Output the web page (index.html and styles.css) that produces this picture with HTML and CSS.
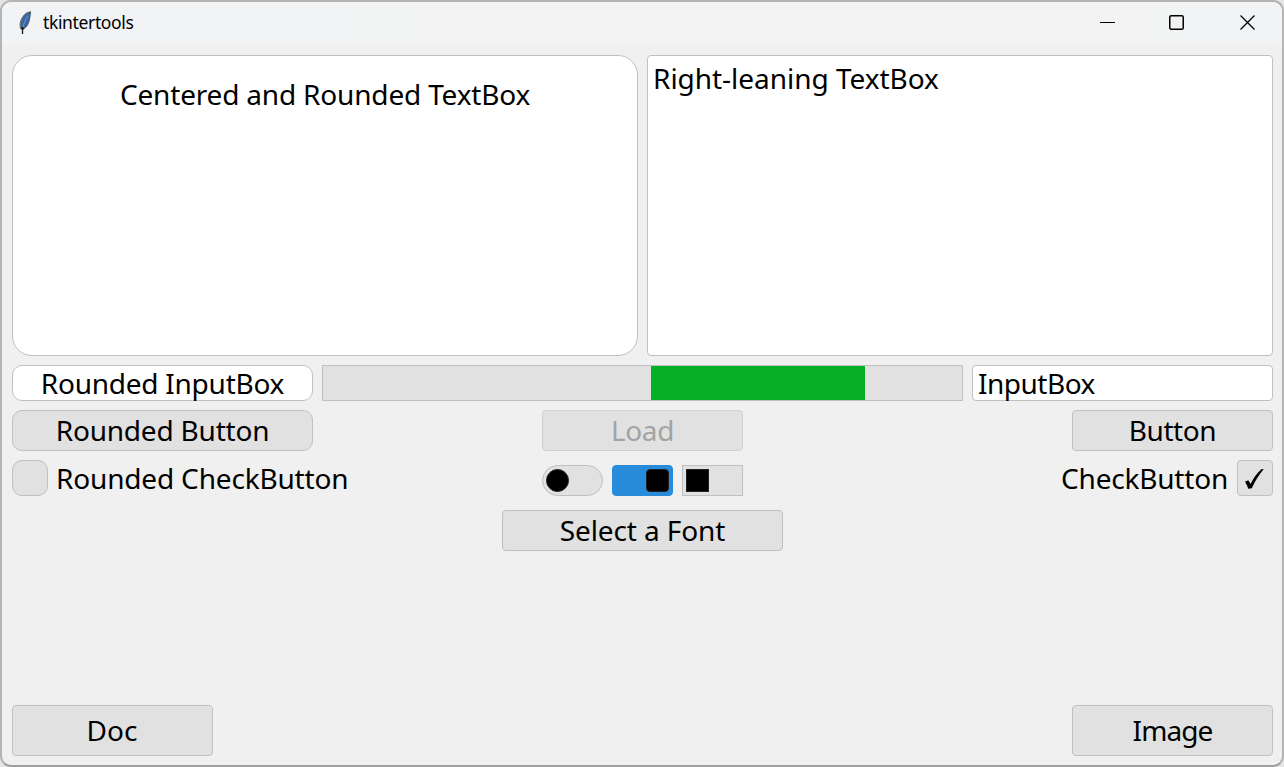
FILE: index.html
```
<!DOCTYPE html>
<html lang="en">
<head>
<meta charset="utf-8">
<title>tkintertools</title>
<link rel="stylesheet" href="styles.css">
</head>
<body>
<div class="window">
  <header class="titlebar">
    <svg class="feather" width="14" height="24" viewBox="0 0 14 24">
      <path d="M12.600 .8C9.500 1.200 6.500 3 4.800 6c-2 3.500-2.600 7.500-2 11.500l2.800.4c3-1.600 5-5 5.900-9.400.5-2.600.8-5.400 1.100-7.700z" fill="#3568a8" stroke="#50565c" stroke-width="1"/>
      <path d="M9.800 4.500C7.500 8.500 5.600 12.500 4.800 17" fill="none" stroke="#6c95c6" stroke-width="1"/>
      <path d="M4.500 6.500C2.500 9.500 1.700 13.500 2.400 17" fill="none" stroke="#777" stroke-width="1.200"/>
      <path d="M2.800 17.500h3M4.500 16v7" fill="none" stroke="#111" stroke-width="1.300"/>
    </svg>
    <span class="title">tkintertools</span>
    <div class="controls">
      <svg width="15" height="15" viewBox="0 0 15 15"><path d="M0 7.500h15" stroke="#000"/></svg>
      <svg width="15" height="15" viewBox="0 0 15 15"><rect x=".75" y=".75" width="13.500" height="13.500" rx="1.500" fill="none" stroke="#000" stroke-width="1.500"/></svg>
      <svg width="15" height="15" viewBox="0 0 15 15"><path d="M.5.5l14 14M14.500.5l-14 14" stroke="#000" stroke-width="1.300"/></svg>
    </div>
  </header>
  <main class="content">
    <div class="row boxes">
      <div class="box textbox round-lg"><span class="t-centered">Centered and Rounded TextBox</span></div>
      <div class="box textbox plain"><span class="t-right">Right-leaning TextBox</span></div>
    </div>
    <div class="row inputs">
      <div class="box input round-md"><span class="t-rinput">Rounded InputBox</span></div>
      <div class="progress"><div class="bar"></div></div>
      <div class="box input plain left"><span class="t-input">InputBox</span></div>
    </div>
    <div class="row buttons">
      <div class="cell"><button class="box btn wide round-md"><span class="t-rbutton">Rounded Button</span></button></div>
      <button class="box btn disabled"><span class="t-load">Load</span></button>
      <div class="cell end"><button class="box btn"><span class="t-button">Button</span></button></div>
    </div>
    <div class="row checks">
      <div class="cell"><span class="box check round-md"></span><span class="label t-rcheck">Rounded CheckButton</span></div>
      <div class="switches">
        <span class="box switch pill"><i class="knob"></i></span>
        <span class="box switch on"><i class="knob"></i></span>
        <span class="box switch square"><i class="knob"></i></span>
      </div>
      <div class="cell end"><span class="label t-check">CheckButton</span><span class="box check"><svg width="22" height="24" viewBox="0 0 22 24"><path d="M1 15.800l3.200-1.500c1 1.200 1.700 2.300 2.300 3.600C9.300 12.500 12.800 7.300 17.300 3.200l2.500-.2C15.300 8.300 11.200 14.500 7.800 22.200l-3.500.6c-.7-2.500-1.800-4.800-3.300-7z"/></svg></span></div>
    </div>
    <div class="row font-row"><button class="box btn font-btn"><span class="t-font">Select a Font</span></button></div>
    <div class="row footer">
      <button class="box btn tall"><span class="t-doc">Doc</span></button>
      <button class="box btn tall"><span class="t-image">Image</span></button>
    </div>
  </main>
</div>
</body>
</html>
```
FILE: styles.css
```
* { box-sizing: border-box; }
body {
  margin: 0;
  background: #e4e4e4;
  font: 28px/36px "Noto Sans", "Open Sans", sans-serif;
  color: #000;
}
.window {
  width: 1284px;
  height: 767px;
  border: 2px solid #b4b4b4;
  border-bottom-color: #a0a0a0;
  border-radius: 11px;
  background: #f0f0f0;
  overflow: hidden;
  display: flex;
  flex-direction: column;
}
.titlebar {
  height: 43px;
  flex: none;
  padding: 0 27px 2px 16px;
  display: flex;
  align-items: center;
  background: linear-gradient(90deg, #f1f3f5, #f3f3f3 50%, #f3f3f3 85%, #f1f3f5);
}
.feather { flex: none; }
.title { margin: 0 0 2px 11px; font-size: 17.5px; line-height: 24px; letter-spacing: -.36px; }
.controls { margin-left: auto; display: flex; gap: 56px; }
.controls svg { display: block; }
.controls svg:first-child { margin-right: -2px; }
.content { flex: 1; display: flex; flex-direction: column; padding: 10px 9px 9px 10px; }
.row { display: flex; flex: none; }
.box {
  border: 1px solid #c0c0c0;
  border-radius: 4px;
  background: #e1e1e1;
}
.box span, .label { white-space: nowrap; }
.boxes { gap: 9px; height: 301px; }
.textbox { width: 626px; background: #fff; text-align: center; padding-top: 20px; }
.textbox.plain { text-align: left; padding: 4px 0 0 5px; }
.box.round-lg { border-radius: 20px; }
.box.round-md { border-radius: 10px; }
.inputs { gap: 9px; height: 36px; margin-top: 9px; }
.input { width: 301px; background: #fff; display: flex; justify-content: center; line-height: 34px; }
.input.left { justify-content: flex-start; padding-left: 5px; }
.progress { width: 641px; border: 1px solid #c0c0c0; background: #e1e1e1; }
.bar { width: 214px; height: 34px; margin-left: 328px; background: #06b025; }
.buttons { height: 41px; margin-top: 9px; }
.cell { flex: 1; display: flex; }
.end { justify-content: flex-end; }
.btn {
  width: 201px;
  height: 41px;
  flex: none;
  padding: 0 0 2px;
  display: flex;
  justify-content: center;
  align-items: center;
  font: inherit;
  line-height: 36px;
  color: #000;
}
.wide { width: 301px; }
.disabled { color: #a3a3a3; border-color: #d0d0d0; }
.checks { height: 36px; margin-top: 9px; }
.check { width: 36px; height: 36px; flex: none; display: flex; justify-content: center; align-items: center; }
.label { margin: 0 9px 0 8px; line-height: 36px; }
.t-centered { letter-spacing: -.18px; }
.t-right { letter-spacing: -.03px; }
.t-rinput { letter-spacing: -.25px; }
.t-input { letter-spacing: -.5px; }
.t-rbutton { letter-spacing: -.2px; }
.t-load { letter-spacing: -.4px; }
.t-button { letter-spacing: -.4px; }
.t-rcheck { letter-spacing: -.17px; }
.t-check { letter-spacing: -.2px; }
.t-font { letter-spacing: -.1px; }
.t-image { letter-spacing: -.9px; }
.t-doc { margin-right: 1px; }
.switches { display: flex; gap: 9px; margin-top: 5px; }
.switch { width: 61px; height: 31px; display: flex; align-items: center; padding: 0 3px; }
.knob { width: 23px; height: 23px; background: #000; border: 1px solid #222; }
.pill { border-radius: 16px; }
.pill .knob { border-radius: 50%; }
.on { background: #288cdb; border-color: #288cdb; justify-content: flex-end; }
.on .knob { border-radius: 4px; }
.square { border-radius: 0; }
.font-row { margin-top: 14px; justify-content: center; }
.font-btn { width: 281px; }
.footer { margin-top: auto; justify-content: space-between; }
.tall { height: 51px; }
```
